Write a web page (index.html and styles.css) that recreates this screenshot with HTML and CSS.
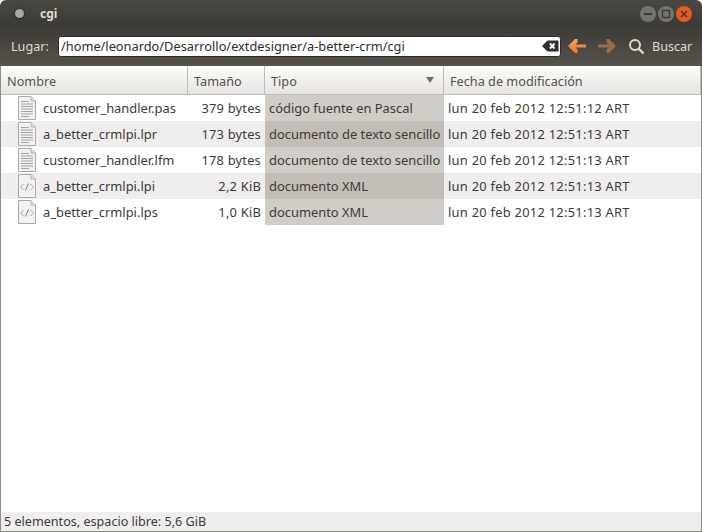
FILE: index.html
```html
<!DOCTYPE html>
<html lang="es">
<head>
  <meta charset="UTF-8" />
  <title>cgi</title>
  <link rel="stylesheet" href="styles.css">
</head>
<body>

<svg class="defs" width="0" height="0">
  <symbol id="file-text" viewBox="0 0 20 24">
    <path d="M1.5 .5H14L18.5 5V23.5H1.5Z" fill="#f1f1ef" stroke="#a9a9a6"/>
    <path d="M14 .5V5H18.5" fill="#dcdcda" stroke="#b5b5b2"/>
    <path d="M4 5.5H12M4 8H16M4 10.5H16M4 13H16M4 15.5H16M4 18H16M4 20.5H12" stroke="#a3a3a0" fill="none"/>
  </symbol>
  <symbol id="file-xml" viewBox="0 0 20 24">
    <path d="M1.5 .5H14L18.5 5V23.5H1.5Z" fill="#f1f1ef" stroke="#a9a9a6"/>
    <path d="M14 .5V5H18.5" fill="#dcdcda" stroke="#b5b5b2"/>
    <path d="M6.5 10L3.5 13L6.5 16M13.5 10L16.5 13L13.5 16" stroke="#a6a6a3" fill="none"/>
    <path d="M11.5 9.5L8.5 16.5" stroke="#77777a" fill="none"/>
  </symbol>
  <linearGradient id="arrow-on" x1="0" y1="0" x2="0" y2="1">
    <stop offset="0" stop-color="#f6a266"/>
    <stop offset="1" stop-color="#e8762c"/>
  </linearGradient>
</svg>

<div class="window">
  <header class="titlebar">
    <span class="menu-dot"></span>
    <span class="title">cgi</span>
    <div class="win-buttons">
      <span class="win-btn">
        <svg width="10" height="10" viewBox="0 0 10 10"><path d="M1 5H9" stroke="#3c3b37" stroke-width="2"/></svg>
      </span>
      <span class="win-btn">
        <svg width="10" height="10" viewBox="0 0 10 10"><rect x="1.5" y="1.5" width="7" height="7" fill="none" stroke="#3c3b37" stroke-width="1.4"/></svg>
      </span>
      <span class="win-btn close">
        <svg width="10" height="10" viewBox="0 0 10 10"><path d="M2 2L8 8M8 2L2 8" stroke="#3c3b37" stroke-width="1.6"/></svg>
      </span>
    </div>
  </header>

  <div class="toolbar">
    <label class="place-label">Lugar:</label>
    <div class="place-entry">
      <span class="place-text">/home/leonardo/Desarrollo/extdesigner/a-better-crm/cgi</span>
      <svg class="clear-icon" width="17" height="12" viewBox="0 0 17 12">
        <path d="M0 6L5.5 .5H16.5V11.5H5.5Z" fill="#2f2e2b"/>
        <path d="M8 3.5L12.5 8.5M12.5 3.5L8 8.5" stroke="#fff" stroke-width="2"/>
      </svg>
    </div>
    <svg class="arrow" width="18" height="14" viewBox="0 0 18 14">
      <path d="M0 7L7 0H9.5V3.5L7.5 5.5H18V8.5H7.5L9.5 10.5V14H7Z" fill="url(#arrow-on)"/>
    </svg>
    <svg class="arrow dim" width="18" height="14" viewBox="0 0 18 14">
      <path d="M18 7L11 0H8.5V3.5L10.5 5.5H0V8.5H10.5L8.5 10.5V14H11Z" fill="#9a6d4c"/>
    </svg>
    <svg class="search-icon" width="17" height="17" viewBox="0 0 17 17">
      <circle cx="7" cy="7" r="5" fill="none" stroke="#dfdbd2" stroke-width="2"/>
      <path d="M10.5 10.5L15.5 15.5" stroke="#dfdbd2" stroke-width="2.4"/>
    </svg>
    <span class="search-label">Buscar</span>
  </div>

  <main class="list">
    <div class="list-head">
      <div class="head-cell">Nombre</div>
      <div class="head-cell">Tamaño</div>
      <div class="head-cell sorted">Tipo<span class="sort-mark"></span></div>
      <div class="head-cell">Fecha de modificación</div>
    </div>

    <div class="row">
      <div class="cell name"><svg class="file-icon"><use href="#file-text"/></svg>customer_handler.pas</div>
      <div class="cell size">379 bytes</div>
      <div class="cell type">código fuente en Pascal</div>
      <div class="cell date">lun 20 feb 2012 12:51:12 ART</div>
    </div>
    <div class="row">
      <div class="cell name"><svg class="file-icon"><use href="#file-text"/></svg>a_better_crmlpi.lpr</div>
      <div class="cell size">173 bytes</div>
      <div class="cell type">documento de texto sencillo</div>
      <div class="cell date">lun 20 feb 2012 12:51:13 ART</div>
    </div>
    <div class="row">
      <div class="cell name"><svg class="file-icon"><use href="#file-text"/></svg>customer_handler.lfm</div>
      <div class="cell size">178 bytes</div>
      <div class="cell type">documento de texto sencillo</div>
      <div class="cell date">lun 20 feb 2012 12:51:13 ART</div>
    </div>
    <div class="row">
      <div class="cell name"><svg class="file-icon"><use href="#file-xml"/></svg>a_better_crmlpi.lpi</div>
      <div class="cell size">2,2 KiB</div>
      <div class="cell type">documento XML</div>
      <div class="cell date">lun 20 feb 2012 12:51:13 ART</div>
    </div>
    <div class="row">
      <div class="cell name"><svg class="file-icon"><use href="#file-xml"/></svg>a_better_crmlpi.lps</div>
      <div class="cell size">1,0 KiB</div>
      <div class="cell type">documento XML</div>
      <div class="cell date">lun 20 feb 2012 12:51:13 ART</div>
    </div>
  </main>

  <footer class="statusbar">5 elementos, espacio libre: 5,6 GiB</footer>
</div>

</body>
</html>
```

FILE: styles.css
```css
* { box-sizing: border-box; margin: 0; padding: 0; }

body {
  width: 702px;
  height: 532px;
  overflow: hidden;
  background: #fff;
  font-family: "Noto Sans", sans-serif;
  font-size: 12.9px;
  color: #3c3b37;
}

.defs {
  position: absolute;
}

.window {
  height: 532px;
  display: flex;
  flex-direction: column;
  border-radius: 6px 6px 0 0;
  overflow: hidden;
  background: #fff;
}

.titlebar {
  height: 26px;
  flex: none;
  display: flex;
  align-items: center;
  padding: 0 3px 0 15px;
  background: linear-gradient(to bottom, #4a4843, #3d3b37);
}

.menu-dot {
  width: 9px;
  height: 9px;
  border-radius: 50%;
  background: #a8a6a0;
  box-shadow: 0 0 1px 1px #2f2e2b;
}

.title {
  margin-left: 16px;
  font-weight: 700;
  font-size: 12px;
  color: #dfdbd2;
}

.win-buttons {
  margin-left: auto;
  display: flex;
  gap: 2px;
  margin-right: 7px;
  margin-top: 1px;
}

.win-btn {
  width: 16px;
  height: 16px;
  border-radius: 50%;
  background: #76746f;
  display: flex;
  align-items: center;
  justify-content: center;
}

.win-btn.close {
  background: #ea5a1f;
}

.toolbar {
  height: 40px;
  flex: none;
  display: flex;
  align-items: center;
  padding: 0 8px 0 11px;
  background: linear-gradient(to bottom, #3d3b37, #57534b);
  color: #dfdbd2;
  font-size: 12.6px;
}

.place-label {
  width: 47px;
  flex: none;
}

.place-entry {
  width: 503px;
  height: 21px;
  flex: none;
  display: flex;
  align-items: center;
  justify-content: space-between;
  padding: 0 1px 0 2px;
  background: #fff;
  border: 1px solid #2f2e2b;
  border-radius: 3px;
  color: #2f2e2b;
}

.place-text {
  white-space: nowrap;
  font-size: 12.8px;
}

.clear-icon {
  flex: none;
}

.arrow {
  flex: none;
  margin-left: 7px;
}

.arrow.dim {
  margin-left: 12px;
}

.search-icon {
  flex: none;
  margin-left: 12px;
}

.search-label {
  margin-left: 7px;
}

.list {
  flex: 1;
  background: #fff;
  border-left: 1px solid #8e8c87;
  border-right: 1px solid #8e8c87;
}

.list-head,
.row {
  display: grid;
  grid-template-columns: 187px 77px 179px 1fr;
}

.list-head {
  height: 29px;
  border-bottom: 1px solid #bfbcb7;
}

.head-cell {
  display: flex;
  align-items: center;
  justify-content: space-between;
  padding: 2px 10px 0 6px;
  background: linear-gradient(to bottom, #fcfcfb, #e6e4e1);
  border-right: 1px solid #bfbcb7;
  color: #55534d;
  font-size: 12.7px;
}

.sort-mark {
  width: 0;
  height: 0;
  border-left: 4.5px solid transparent;
  border-right: 4.5px solid transparent;
  border-top: 6px solid #6e6c67;
  margin-right: -1px;
  margin-top: -2px;
}

.row {
  height: 26px;
  align-items: stretch;
}

.row:nth-of-type(odd) {
  background: #f0eeec;
}

.cell {
  display: flex;
  align-items: center;
  white-space: nowrap;
}

.name {
  padding-left: 16px;
}

.file-icon {
  width: 20px;
  height: 24px;
  flex: none;
  margin-right: 6px;
}

.size {
  justify-content: flex-end;
  padding-right: 4px;
  letter-spacing: 0.2px;
}

.type {
  padding-left: 4px;
  background: #d0ccc8;
}

.row:nth-of-type(odd) .type {
  background: #c3bdb8;
}

.date {
  padding-left: 4px;
  letter-spacing: 0.26px;
}

.statusbar {
  height: 20px;
  flex: none;
  display: flex;
  align-items: center;
  padding-left: 3px;
  background: #f0eeec;
  border: 1px solid #8e8c87;
  border-top: none;
  font-size: 12.6px;
}
```
